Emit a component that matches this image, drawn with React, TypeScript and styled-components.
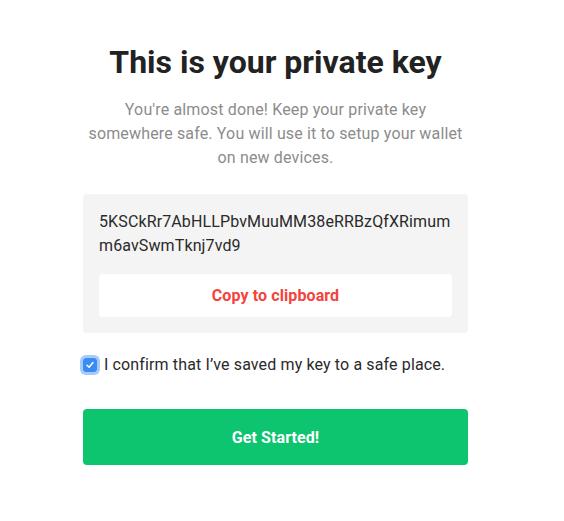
import React, { useState } from "react";
import styled, { createGlobalStyle } from "styled-components";

const GlobalStyle = createGlobalStyle`
  html, body { margin: 0; padding: 0; background: #ffffff; }
  body { font-family: Roboto, "Liberation Sans", Arial, sans-serif; -webkit-font-smoothing: antialiased; }
  * { box-sizing: border-box; }
`;

const Page = styled.div`
  padding: 43px 96px 40px 83px;
`;

const Column = styled.main`
  display: flex;
  flex-direction: column;
  align-items: stretch;
`;

const Title = styled.h1`
  margin: 0;
  font-size: 32px;
  line-height: 38px;
  font-weight: 700;
  color: #222222;
  text-align: center;
`;

const Subtitle = styled.p`
  margin: 17px auto 0;
  max-width: 384px;
  font-size: 16px;
  line-height: 24px;
  letter-spacing: 0.15px;
  color: #8c8c8c;
  text-align: center;
`;

const KeyBox = styled.section`
  margin-top: 24px;
  background: #f4f4f4;
  border-radius: 4px;
  padding: 16px;
  display: flex;
  flex-direction: column;
  gap: 16px;
`;

const KeyText = styled.div`
  font-size: 16px;
  line-height: 24px;
  letter-spacing: 0.12px;
  color: #2a2a2a;
  word-break: break-all;
`;

const CopyButton = styled.button`
  height: 43px;
  border: none;
  border-radius: 4px;
  background: #ffffff;
  color: #f4433c;
  font-family: inherit;
  font-size: 16px;
  font-weight: 700;
  letter-spacing: 0.1px;
  cursor: pointer;
`;

const ConfirmRow = styled.label`
  margin-top: 20px;
  display: flex;
  align-items: center;
  gap: 7px;
  font-size: 16px;
  line-height: 24px;
  letter-spacing: 0.13px;
  color: #2a2a2a;
  cursor: pointer;
`;

const HiddenInput = styled.input`
  position: absolute;
  opacity: 0;
  width: 0;
  height: 0;
`;

const Box = styled.span<{ $checked: boolean }>`
  flex: none;
  width: 14px;
  height: 14px;
  border-radius: 3px;
  background: ${(p) => (p.$checked ? "#3a8cf2" : "#ffffff")};
  border: 1px solid ${(p) => (p.$checked ? "#3a8cf2" : "#9a9a9a")};
  box-shadow: 0 0 0 3px rgba(90, 160, 245, 0.55);
  display: flex;
  align-items: center;
  justify-content: center;
`;

const StartButton = styled.button`
  margin-top: 32px;
  height: 56px;
  border: none;
  border-radius: 4px;
  background: #0dc46f;
  color: #ffffff;
  font-family: inherit;
  font-size: 16px;
  font-weight: 700;
  letter-spacing: 0.1px;
  cursor: pointer;
`;

export default function App() {
  const [checked, setChecked] = useState(true);
  return (
    <>
      <GlobalStyle />
      <Page>
        <Column>
          <Title>This is your private key</Title>
          <Subtitle>
            You're almost done! Keep your private key somewhere safe. You will use it to setup your wallet on new devices.
          </Subtitle>
          <KeyBox>
            <KeyText>5KSCkRr7AbHLLPbvMuuMM38eRRBzQfXRimumm6avSwmTknj7vd9</KeyText>
            <CopyButton type="button">Copy to clipboard</CopyButton>
          </KeyBox>
          <ConfirmRow>
            <HiddenInput type="checkbox" checked={checked} onChange={(e) => setChecked(e.target.checked)} />
            <Box $checked={checked}>
              {checked && (
                <svg width="10" height="10" viewBox="0 0 10 10" fill="none">
                  <path d="M2 5.2 L4.1 7.3 L8 2.6" stroke="#fff" strokeWidth="1.5" strokeLinecap="round" strokeLinejoin="round" />
                </svg>
              )}
            </Box>
            I confirm that I’ve saved my key to a safe place.
          </ConfirmRow>
          <StartButton type="button">Get Started!</StartButton>
        </Column>
      </Page>
    </>
  );
}
